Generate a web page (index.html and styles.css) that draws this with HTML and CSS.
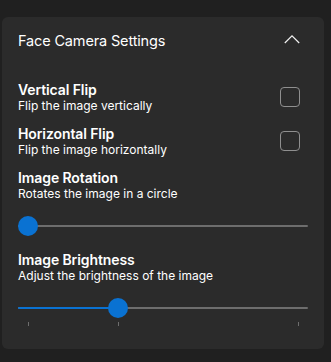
FILE: index.html
```html
<!DOCTYPE html>
<html>
<head>
<meta charset="utf-8">
<link rel="stylesheet" href="styles.css">
</head>
<body>
<div class="card">
  <div class="header">
    <span class="title">Face Camera Settings</span>
    <svg class="chevron" width="16" height="9" viewBox="0 0 16 9"><polyline points="0.8,8 8,0.9 15.2,8" fill="none" stroke="#f2f2f2" stroke-width="1.2"/></svg>
  </div>
  <div class="content">
    <div class="row">
      <div class="text">
        <div class="label">Vertical Flip</div>
        <div class="desc">Flip the image vertically</div>
      </div>
      <div class="checkbox"></div>
    </div>
    <div class="row">
      <div class="text">
        <div class="label">Horizontal Flip</div>
        <div class="desc">Flip the image horizontally</div>
      </div>
      <div class="checkbox"></div>
    </div>
    <div class="row">
      <div class="text">
        <div class="label">Image Rotation</div>
        <div class="desc">Rotates the image in a circle</div>
      </div>
    </div>
    <div class="slider slider-rotation">
      <div class="track"></div>
      <div class="thumb" style="left: 0px"></div>
    </div>
    <div class="row row-brightness">
      <div class="text">
        <div class="label">Image Brightness</div>
        <div class="desc">Adjust the brightness of the image</div>
      </div>
    </div>
    <div class="slider slider-brightness">
      <div class="track"></div>
      <div class="fill" style="width: 100px"></div>
      <div class="thumb" style="left: 90px"></div>
      <div class="tick" style="left: 10px"></div>
      <div class="tick" style="left: 100px"></div>
      <div class="tick" style="left: 280px"></div>
    </div>
  </div>
</div>
</body>
</html>
```

FILE: styles.css
```css
html, body {
  margin: 0;
  padding: 0;
  background: #202020;
}
body {
  padding: 17px 7px 0 2px;
  font-family: "Inter", "Noto Sans", sans-serif;
  color: #ffffff;
}
.card {
  width: 322px;
  height: 332px;
  box-sizing: border-box;
  background: #2b2b2b;
  border-radius: 6px;
  padding: 0 16px;
}
.header {
  display: flex;
  align-items: center;
  justify-content: space-between;
  padding: 14px 0 18px 0;
  height: 20px;
}
.title {
  font-size: 14.5px;
  line-height: 20px;
  font-weight: 400;
  letter-spacing: -0.15px;
}
.chevron {
  margin-right: 8px;
  margin-top: -3px;
}
.content {
  padding-top: 12px;
  display: flex;
  flex-direction: column;
}
.row {
  display: flex;
  align-items: center;
  justify-content: space-between;
  height: 33px;
  margin-bottom: 11px;
}
.label {
  font-size: 14px;
  line-height: 17px;
  font-weight: 600;
  letter-spacing: -0.1px;
}
.desc {
  font-size: 12px;
  line-height: 16px;
  font-weight: 400;
}
.checkbox {
  width: 18px;
  height: 18px;
  border: 1px solid #8f8f8f;
  border-radius: 4px;
  margin-right: 8px;
  margin-top: -1px;
}
.slider {
  position: relative;
  height: 20px;
}
.slider-rotation {
  margin-top: 3px;
  margin-bottom: 15px;
}
.slider-brightness {
  margin-top: 3px;
}
.track {
  position: absolute;
  left: 0;
  right: 0;
  top: 9px;
  height: 2px;
  background: #6d6d6d;
  border-radius: 1px;
}
.fill {
  position: absolute;
  left: 0;
  top: 9px;
  height: 2px;
  background: #0a72d2;
  border-radius: 1px;
}
.thumb {
  position: absolute;
  top: 0;
  width: 20px;
  height: 20px;
  border-radius: 50%;
  background: #0a72d2;
}
.tick {
  position: absolute;
  top: 24px;
  width: 1px;
  height: 4px;
  background: #6d6d6d;
}
```
